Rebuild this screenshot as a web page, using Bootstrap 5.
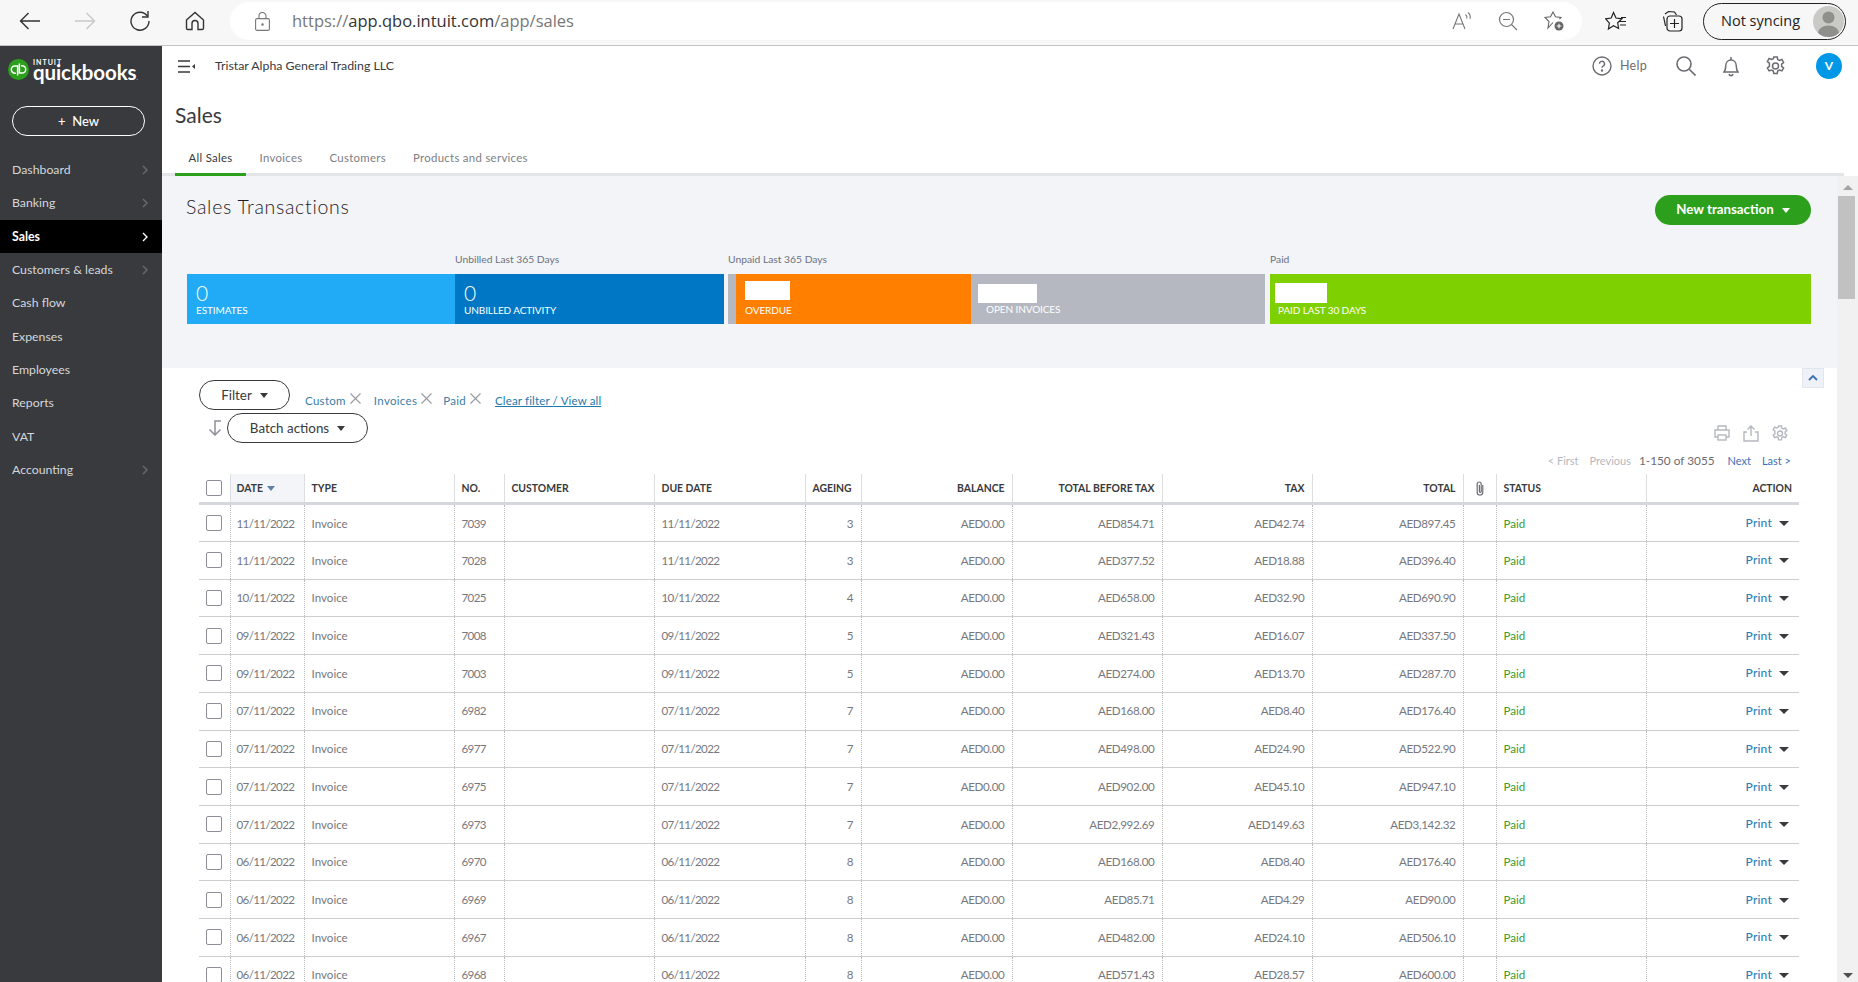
<!doctype html>
<html lang="en">
<head>
<meta charset="utf-8">
<title>Sales - QuickBooks</title>
<link href="https://cdn.jsdelivr.net/npm/bootstrap@5.3.0/dist/css/bootstrap.min.css" rel="stylesheet">
<style>
html,body{height:100%;}
body{overflow:hidden;font-family:Lato,"Liberation Sans",sans-serif;color:#393a3d;background:#fff;font-size:12px;}
svg{display:block;flex:none;}
.shell{height:982px;}
/* browser chrome */
.chrome{height:46px;background:#f7f7f7;border-bottom:1px solid #c4c4c4;padding:0 0 3px 10px;flex:none;}
.cbtn{width:40px;height:40px;margin-right:15px;flex:none;}
.addr{width:1352px;height:38px;background:#fff;border-radius:19px;flex:none;padding-left:25px;margin-left:0;}
.addr-text{font-family:"Open Sans",sans-serif;font-size:16.5px;color:#777;margin-left:22px;white-space:nowrap;}
.addr-text b{font-weight:400;color:#333;}
.pill-icons{gap:26px;padding-right:18px;}
.ico20{width:20px;height:20px;}
.chrome-right{margin-left:23px;gap:34px;}
.sync{width:143px;height:37px;border:1.5px solid #222;border-radius:19px;margin-left:20px;padding:0 1px 0 17px;font-family:"Open Sans",sans-serif;font-size:14.5px;color:#222;flex:none;white-space:nowrap;}
.sync-av{width:31px;height:31px;border-radius:50%;background:#c9c9c6;overflow:hidden;flex:none;}
/* sidebar */
.side{width:162px;background:#393a3d;flex:none;}
.brand{height:42px;padding:13px 0 0 8px;margin-bottom:18px;}
.brand-words{margin-left:4px;line-height:1;color:#fff;}
.brand-in{font-size:7px;font-weight:700;letter-spacing:1px;height:5px;line-height:5px;margin-top:1px;}
.brand-qb{font-size:20.5px;font-weight:700;line-height:15px;letter-spacing:-.1px;}
.brand-qb i{font-style:normal;font-size:6px;font-weight:400;}
.new-btn{width:133px;height:30px;margin-left:12px;border:1px solid #fff;border-radius:15px;color:#fff;font-size:13px;font-weight:500;padding:1px 0 0;background:transparent;margin-bottom:17.4px;}
.new-btn:hover{color:#fff;}
.side-link{height:33.35px;padding:0 12px;color:#d4d7dc;font-size:12.3px;}
.side-link:hover{color:#fff;}
.side-link.on{background:#000;color:#fff;font-weight:700;}
.chev{width:6px;height:10px;margin-right:2px;}
/* header */
.main{min-width:0;}
.topbar{height:40px;padding:0 16px 0 16px;flex:none;}
.company{font-size:12.35px;margin-left:20px;color:#393a3d;}
.help{color:#6b6c72;font-size:12.5px;letter-spacing:.3px;margin:0 29px 0 8px;}
.avatar{width:26px;height:26px;border-radius:50%;background:#0097e6;color:#fff;font-size:12px;font-weight:700;flex:none;}
.ic-search{margin-right:27px;}
.ic-bell{margin-right:27px;}
.ic-gear{margin-right:31px;}
.page-title{font-size:21px;margin:0 0 0 13px;padding-top:15px;height:55px;line-height:28px;font-weight:400;color:#393a3d;}
.tabs-row{height:36px;margin-right:14px;border-bottom:3px solid #e3e5e8;flex:none;padding-left:13px;}
.tab-i{height:36px;padding:9px 13.5px 0;color:#7c7e85;font-size:11.4px;letter-spacing:.3px;margin-bottom:-3px;border-bottom:3px solid transparent;}
.tab-i:hover{color:#7c7e85;}
.tab-i.on{color:#393a3d;border-bottom-color:#2ca01c;font-weight:400;}
/* scroll area */
.scrollwrap{min-height:0;}
.pane{min-width:0;overflow:hidden;}
.track{width:21px;background:#f1f1f1;flex:none;}
.arrow-u{width:0;height:0;border-left:5px solid transparent;border-right:5px solid transparent;border-bottom:5px solid #a3a3a3;margin:9px auto 6px;}
.thumb{width:17px;height:103px;background:#c1c1c1;margin-left:1px;}
.arrow-d{width:0;height:0;border-left:5px solid transparent;border-right:5px solid transparent;border-top:5px solid #505050;margin:0 auto 4px;}
.summary{height:192px;background:#f3f4f7;padding:19px 26px 0 24px;flex:none;}
.sum-title{font-size:19.5px;font-weight:300;letter-spacing:.7px;line-height:24px;color:#1f2023;margin:0;}
.new-tx{width:156px;height:30px;border-radius:15px;background:#2ca01c;color:#fff;font-size:13.3px;font-weight:700;padding:0;border:0;}
.new-tx:hover{background:#2ca01c;color:#fff;}
.tri{display:inline-block;width:0;height:0;border-left:4px solid transparent;border-right:4px solid transparent;border-top:5px solid currentColor;}
.bars{margin:28px 0 0 1px;}
.grp1{width:537px;margin-right:4px;}
.grp2{width:537px;margin-right:5px;}
.grp3{width:541px;}
.col-est{width:268px;}
.col-unb{width:269px;}
.blabel{height:21px;line-height:12px;font-size:10.3px;color:#6b7280;flex:none;white-space:nowrap;}
.seg{height:50px;color:#fff;font-size:10px;padding:7px 0 0 9px;}
.seg-org{width:235px;}
.seg-num{font-size:21px;font-weight:300;line-height:23px;height:22px;}
.seg-lab{line-height:14px;height:14px;white-space:nowrap;letter-spacing:-.1px;}
.c-est{background:#21abf6;}
.c-unb{background:#0077c5;}
.c-gry{background:#b5b8c0;}
.c-org{background:#ff8000;}
.c-grn{background:#7fd000;}
.sliver{width:8px;flex:none;}
.seg-open{padding-left:7px;}
.seg-paid{padding-left:8px;}
.redact{background:#fff;}
.r1{width:45px;height:19px;margin-bottom:3px;}
.r2{width:59px;height:19px;margin:3px 0 -1px;}
.r3{width:52px;height:20px;margin:2px 0 0 -3px;}
.lab-open{margin-left:8px;}
/* filter */
.tools{height:106px;padding:12px 37px 0;position:relative;flex:none;}
.collapse-btn{position:absolute;right:13px;top:0;width:22px;height:20px;background:#eef1f7;border:1px solid #e2e6ee;}
.pill{height:30px;border:1px solid #393a3d;border-radius:15px;background:#fff;color:#393a3d;font-size:13.4px;padding:0;}
.pill:hover{background:#fff;color:#393a3d;border-color:#393a3d;}
.p-filter{width:91px;}
.p-batch{width:141px;}
.chips{margin-left:15px;font-size:11.5px;color:#3b7ea8;padding-top:12px;letter-spacing:.3px;}
.chips a{color:#1f79ae;margin-left:14px;letter-spacing:.15px;}
.chip-x{margin:1px 0 0 4px;}
.chip-g{margin-right:13px;}
.chip-h{margin-right:11px;}
.batch-row{margin-top:3px;}
.sort-ic{margin:7px 5px 0 9px;}
.tool-right{padding-right:9px;}
.tool-ic{gap:13px;margin-bottom:11.5px;padding-right:3px;}
.pager{font-size:11px;color:#b5b8c0;height:14px;line-height:14px;margin-bottom:6.5px;white-space:nowrap;}
.pager .cnt{color:#6b6c72;font-size:11.8px;margin:0 13px 0 8px;}
.pager a{color:#3f6fb5;text-decoration:none;}
.pager .gap1{margin-right:11px;}
/* table */
.tblwrap{padding:0 37px;}
.qtable{table-layout:fixed;width:1600px;margin:0;border-collapse:collapse;font-size:11.6px;color:#77787e;}
.qtable>thead>tr>th{height:29.5px;padding:0 7px;border-top:0;border-bottom:3px solid #d4d7dc;border-left:1px solid #dcdee2;font-size:10.4px;font-weight:700;color:#393a3d;vertical-align:middle;white-space:nowrap;background:#fff;box-shadow:none;}
.qtable>tbody>tr>td{height:37.7px;padding:0 7px;border-bottom:1px solid #ccced2;border-left:1px dotted #b9b9b9;vertical-align:middle;color:#77787e;background:#fff;box-shadow:none;white-space:nowrap;font-weight:400;}
.qtable>thead>tr>th:first-child,.qtable>tbody>tr>td:first-child{border-left:0;padding:0 0 0 7px;}
.qtable>thead>tr>th.th-sort{background:#f4f5f8;padding-left:6px;}
.qtable>tbody>tr>td.dt{letter-spacing:-.65px;}
.qtable>tbody>tr>td.d{padding-left:6px;padding-right:0;letter-spacing:-.65px;}
.qtable>tbody>tr>td.mn{text-align:right;letter-spacing:-.35px;}
.qtable>tbody>tr>td.pd{color:#3c9b2c;}
.qtable>tbody>tr>td.act{padding-right:10px;}
.qtable>thead>tr>th.act-h{padding-right:7px;}
.qtable .form-check-input{width:16px;height:16px;margin:0;border:1px solid #8d9096;border-radius:2px;display:block;}
.pr{color:#2b7fb8;font-size:12px;font-weight:500;margin-right:7px;letter-spacing:.2px;}
.car{color:#393a3d;vertical-align:1px;border-left-width:5px;border-right-width:5px;border-top-width:5.5px;}
.tri-sort{color:#5f7fa5;margin-left:2px;vertical-align:1px;}
.clip{margin-left:5px;}
</style>
</head>
<body>
<div class="shell d-flex flex-column">
  <div class="chrome d-flex align-items-center">
    <div class="cbtn d-flex align-items-center justify-content-center"><svg width="22" height="18" viewBox="0 0 22 18" fill="none" stroke="#333" stroke-width="1.4"><path d="M21 9H1.500M9.500 1 1.500 9l8 8"/></svg></div>
    <div class="cbtn d-flex align-items-center justify-content-center"><svg width="22" height="18" viewBox="0 0 22 18" fill="none" stroke="#c9c9c9" stroke-width="1.4"><path d="M1 9h19.500M12.500 1l8 8-8 8"/></svg></div>
    <div class="cbtn d-flex align-items-center justify-content-center"><svg width="22" height="22" viewBox="0 0 22 22" fill="none" stroke="#333" stroke-width="1.4"><path d="M18.500 6.200A9 9 0 1 0 20 11"/><path d="M19 1v6h-6"/></svg></div>
    <div class="cbtn d-flex align-items-center justify-content-center"><svg width="20" height="20" viewBox="0 0 20 20" fill="none" stroke="#333" stroke-width="1.4"><path d="M1.500 9 10 1.500 18.500 9v8.200a1.300 1.300 0 0 1-1.300 1.300H13v-6a3 3 0 0 0-6 0v6H2.800a1.300 1.300 0 0 1-1.300-1.300z"/></svg></div>
    <div class="addr d-flex align-items-center">
      <svg width="15" height="19" viewBox="0 0 15 19" fill="none" stroke="#777" stroke-width="1.1"><rect x=".6" y="6.600" width="13.800" height="11.800" rx="1.500"/><path d="M4 6.500V4a3.500 3.500 0 0 1 7 0v2.500"/><circle cx="7.500" cy="12.500" r=".7" fill="#777"/></svg>
      <span class="addr-text">https://<b>app.qbo.intuit.com</b>/app/sales</span>
      <div class="ms-auto d-flex align-items-center pill-icons">
        <svg class="ico20" viewBox="0 0 20 20" fill="none" stroke="#777" stroke-width="1.1"><path d="M1 18 7 3l6 15M3.200 13h7.600M13.500 3.500c1.300 1 1.700 2.500 1.300 4M16 1.500c2 1.600 2.600 4 2 6.300"/></svg>
        <svg class="ico20" viewBox="0 0 20 20" fill="none" stroke="#777" stroke-width="1.200"><circle cx="8.500" cy="8.500" r="7"/><path d="M13.500 13.500 19 19M5 8.500h7"/></svg>
        <svg class="ico20" viewBox="0 0 20 20" fill="none" stroke="#666" stroke-width="1.100"><path d="M9 11.500 4 17l1-6.500L1 6.500l5.500-.8L9 1l2.500 4.700 5.500.8-1.500 1.500"/><circle cx="15" cy="15" r="4.500" fill="#666" stroke="none"/><path d="M12.700 15h4.600M15 12.700v4.600" stroke="#fff"/></svg>
      </div>
    </div>
    <div class="d-flex align-items-center chrome-right">
      <svg width="22" height="20" viewBox="0 0 22 20" fill="none" stroke="#222" stroke-width="1.200"><path d="M8.500 1.500 11 7l6 .8-4.300 4 .9 5.700-5.100-2.700L3.400 18l1-5.800L.6 7.800l5.600-.8zM14 10.500h7M15 14h6M16 6.500h5"/></svg>
      <svg width="22" height="22" viewBox="0 0 22 22" fill="none" stroke="#222" stroke-width="1.200"><path d="M4 4 7.500 1.500 13.500 2l2 3"/><path d="M2.500 6.500 4.500 16"/><rect x="6" y="6" width="15" height="15" rx="3"/><path d="M13.500 9v9M9 13.500h9"/></svg>
    </div>
    <div class="sync d-flex align-items-center justify-content-between">Not syncing
      <div class="sync-av"><svg width="31" height="31" viewBox="0 0 31 31" fill="#8f8f8c"><circle cx="15.500" cy="11.500" r="6"/><ellipse cx="15.500" cy="27" rx="10.500" ry="7.500"/></svg></div>
    </div>
  </div>
  <div class="d-flex flex-grow-1" style="min-height:0">
    <aside class="side d-flex flex-column">
      <div class="brand d-flex align-items-start">
        <svg width="21" height="21" viewBox="0 0 21 21" fill="none"><circle cx="10.500" cy="10.500" r="10.500" fill="#2ca01c"/><path d="M9.600 16.500V7H6.900a3.600 3.600 0 0 0 0 7.200H8M11.400 4.500V14h2.700a3.600 3.600 0 0 0 0-7.200H13" stroke="#fff" stroke-width="1.500"/></svg>
        <div class="brand-words"><div class="brand-in">INTUIT</div><div class="brand-qb">quickbooks<i>.</i></div></div>
      </div>
      <button type="button" class="btn new-btn">+ &nbsp;New</button>
      <nav class="nav flex-column">
        <a class="nav-link side-link d-flex align-items-center justify-content-between" href="#">Dashboard<svg class="chev" viewBox="0 0 6 10" fill="none" stroke="#6b6c72" stroke-width="1.400"><path d="m1 1 4 4-4 4"/></svg></a>
        <a class="nav-link side-link d-flex align-items-center justify-content-between" href="#">Banking<svg class="chev" viewBox="0 0 6 10" fill="none" stroke="#6b6c72" stroke-width="1.400"><path d="m1 1 4 4-4 4"/></svg></a>
        <a class="nav-link side-link on d-flex align-items-center justify-content-between" href="#">Sales<svg class="chev" viewBox="0 0 6 10" fill="none" stroke="#fff" stroke-width="1.400"><path d="m1 1 4 4-4 4"/></svg></a>
        <a class="nav-link side-link d-flex align-items-center justify-content-between" href="#">Customers &amp; leads<svg class="chev" viewBox="0 0 6 10" fill="none" stroke="#6b6c72" stroke-width="1.400"><path d="m1 1 4 4-4 4"/></svg></a>
        <a class="nav-link side-link d-flex align-items-center" href="#">Cash flow</a>
        <a class="nav-link side-link d-flex align-items-center" href="#">Expenses</a>
        <a class="nav-link side-link d-flex align-items-center" href="#">Employees</a>
        <a class="nav-link side-link d-flex align-items-center" href="#">Reports</a>
        <a class="nav-link side-link d-flex align-items-center" href="#">VAT</a>
        <a class="nav-link side-link d-flex align-items-center justify-content-between" href="#">Accounting<svg class="chev" viewBox="0 0 6 10" fill="none" stroke="#6b6c72" stroke-width="1.400"><path d="m1 1 4 4-4 4"/></svg></a>
      </nav>
    </aside>
    <div class="main flex-grow-1 d-flex flex-column">
      <div class="topbar d-flex align-items-center">
        <svg width="17" height="13" viewBox="0 0 17 13" fill="none" stroke="#393a3d" stroke-width="1.500"><path d="M0 1h12M0 6.500h12M0 12h12"/><path d="M17 4v5l-3-2.500z" fill="#393a3d" stroke="none"/></svg>
        <span class="company">Tristar Alpha General Trading LLC</span>
        <div class="ms-auto d-flex align-items-center">
          <svg width="20" height="20" viewBox="0 0 20 20" fill="none" stroke="#6b6c72" stroke-width="1.400"><circle cx="10" cy="10" r="9"/><path d="M7.500 7.800a2.500 2.500 0 1 1 3.700 2.200c-.8.500-1.200 1-1.200 1.800"/><circle cx="10" cy="14.500" r=".5" fill="#6b6c72"/></svg>
          <span class="help">Help</span>
          <svg class="ic-search" width="20" height="20" viewBox="0 0 20 20" fill="none" stroke="#6b6c72" stroke-width="1.600"><circle cx="8" cy="8" r="7"/><path d="m13 13 6.500 6.500"/></svg>
          <svg class="ic-bell" width="16" height="21" viewBox="0 0 16 21" fill="none" stroke="#6b6c72" stroke-width="1.500"><path d="M1 16c1.500-1.500 1.700-3 1.700-6C2.700 6.500 5 4 8 4s5.300 2.500 5.300 6c0 3 .2 4.500 1.700 6zM8 1v3M6 18c.3 1.200 1 1.700 2 1.700s1.700-.5 2-1.700"/></svg>
          <svg class="ic-gear" width="19" height="20" viewBox="0 0 19 20" fill="none" stroke="#6b6c72" stroke-width="1.500"><path d="M7.800 1h3.400l.5 2.600 1.800.9 2.400-1 1.700 3-2 1.700v2.100l2 1.600-1.700 3-2.400-.9-1.800 1-.5 2.600H7.800l-.5-2.600-1.800-1-2.400.9-1.700-3 2-1.600V7.200l-2-1.700 1.700-3 2.400 1 1.800-.9z"/><circle cx="9.500" cy="10" r="3"/></svg>
          <div class="avatar d-flex align-items-center justify-content-center">V</div>
        </div>
      </div>
      <h1 class="page-title">Sales</h1>
      <div class="tabs-row d-flex">
        <a class="tab-i on text-decoration-none" href="#">All Sales</a>
        <a class="tab-i text-decoration-none" href="#">Invoices</a>
        <a class="tab-i text-decoration-none" href="#">Customers</a>
        <a class="tab-i text-decoration-none" href="#">Products and services</a>
      </div>
      <div class="scrollwrap d-flex flex-grow-1">
        <div class="pane flex-grow-1 d-flex flex-column">
          <section class="summary">
            <div class="d-flex justify-content-between align-items-start">
              <h2 class="sum-title">Sales Transactions</h2>
              <button type="button" class="btn new-tx d-flex align-items-center justify-content-center gap-2">New transaction <span class="tri"></span></button>
            </div>
            <div class="bars d-flex">
              <div class="grp1 d-flex">
                <div class="col-est d-flex flex-column"><div class="blabel"></div><div class="seg c-est"><div class="seg-num">0</div><div class="seg-lab">ESTIMATES</div></div></div>
                <div class="col-unb d-flex flex-column"><div class="blabel">Unbilled Last 365 Days</div><div class="seg c-unb"><div class="seg-num">0</div><div class="seg-lab">UNBILLED ACTIVITY</div></div></div>
              </div>
              <div class="grp2 d-flex flex-column">
                <div class="blabel">Unpaid Last 365 Days</div>
                <div class="d-flex">
                  <div class="sliver c-gry"></div>
                  <div class="seg seg-org c-org"><div class="redact r1"></div><div class="seg-lab">OVERDUE</div></div>
                  <div class="seg seg-open c-gry flex-grow-1"><div class="redact r2"></div><div class="seg-lab lab-open">OPEN INVOICES</div></div>
                </div>
              </div>
              <div class="grp3 d-flex flex-column">
                <div class="blabel">Paid</div>
                <div class="seg seg-paid c-grn"><div class="redact r3"></div><div class="seg-lab">PAID LAST 30 DAYS</div></div>
              </div>
            </div>
          </section>
          <section class="tools d-flex justify-content-between">
            <div class="collapse-btn d-flex align-items-center justify-content-center"><svg width="10" height="6" viewBox="0 0 10 6" fill="none" stroke="#3f6fb5" stroke-width="1.800"><path d="m1 5 4-4 4 4"/></svg></div>
            <div>
              <div class="d-flex">
                <button type="button" class="btn pill p-filter d-flex align-items-center justify-content-center gap-2">Filter <span class="tri"></span></button>
                <div class="chips d-flex align-items-start">
                  <span class="d-flex chip-g">Custom<svg class="chip-x" width="11" height="11" viewBox="0 0 11 11" stroke="#9a9ca2" stroke-width="1.200"><path d="m.5.500 10 10m0-10-10 10"/></svg></span>
                  <span class="d-flex chip-h">Invoices<svg class="chip-x" width="11" height="11" viewBox="0 0 11 11" stroke="#9a9ca2" stroke-width="1.200"><path d="m.5.500 10 10m0-10-10 10"/></svg></span>
                  <span class="d-flex">Paid<svg class="chip-x" width="11" height="11" viewBox="0 0 11 11" stroke="#9a9ca2" stroke-width="1.200"><path d="m.5.500 10 10m0-10-10 10"/></svg></span>
                  <a href="#">Clear filter / View all</a>
                </div>
              </div>
              <div class="d-flex batch-row">
                <svg class="sort-ic" width="14" height="16" viewBox="0 0 14 16" fill="none" stroke="#8d9096" stroke-width="1.500"><path d="M13 1H7v14M1.500 9.500 7 15l5.500-5.500"/></svg>
                <button type="button" class="btn pill p-batch d-flex align-items-center justify-content-center gap-2">Batch actions <span class="tri"></span></button>
              </div>
            </div>
            <div class="d-flex flex-column align-items-end justify-content-end tool-right">
              <div class="d-flex tool-ic">
                <svg width="16" height="16" viewBox="0 0 16 16" fill="none" stroke="#b5b8c0" stroke-width="1.400"><path d="M4 5V1h8v4M4 12H1V5h14v7h-3"/><rect x="4" y="10" width="8" height="5"/></svg>
                <svg width="16" height="17" viewBox="0 0 16 17" fill="none" stroke="#b5b8c0" stroke-width="1.400"><path d="M4 7H1v9h14V7h-3M8 11V1M4.500 4.500 8 1l3.500 3.500"/></svg>
                <svg width="16" height="17" viewBox="0 0 19 20" fill="none" stroke="#b5b8c0" stroke-width="1.700"><path d="M7.800 1h3.400l.5 2.600 1.800.9 2.400-1 1.700 3-2 1.700v2.100l2 1.600-1.700 3-2.400-.9-1.800 1-.5 2.600H7.800l-.5-2.600-1.800-1-2.400.9-1.700-3 2-1.600V7.200l-2-1.700 1.700-3 2.400 1 1.800-.9z"/><circle cx="9.500" cy="10" r="3"/></svg>
              </div>
              <div class="pager"><span class="gap1">&lt; First</span><span>Previous</span><span class="cnt">1-150 of 3055</span><a class="gap1" href="#">Next</a><a href="#">Last &gt;</a></div>
            </div>
          </section>
          <div class="tblwrap">
            <table class="table qtable">
              <colgroup><col style="width:31px"><col style="width:74px"><col style="width:150px"><col style="width:50px"><col style="width:150px"><col style="width:151px"><col style="width:56px"><col style="width:151px"><col style="width:150px"><col style="width:150px"><col style="width:151px"><col style="width:33px"><col style="width:150px"><col style="width:153px"></colgroup>
              <thead><tr>
                <th><input class="form-check-input" type="checkbox" aria-label="Select all"></th>
                <th class="th-sort">DATE <span class="tri tri-sort"></span></th>
                <th>TYPE</th><th>NO.</th><th>CUSTOMER</th><th>DUE DATE</th><th>AGEING</th>
                <th class="text-end">BALANCE</th><th class="text-end">TOTAL BEFORE TAX</th><th class="text-end">TAX</th><th class="text-end">TOTAL</th>
                <th><svg class="clip" width="8" height="15" viewBox="0 0 8 15" fill="none" stroke="#6b6c72" stroke-width="1.200"><path d="M6.800 4v7.200a2.800 2.800 0 0 1-5.600 0V3a2 2 0 0 1 4 0v7.500a.9.900 0 0 1-1.800 0V4"/></svg></th>
                <th>STATUS</th><th class="text-end act-h">ACTION</th>
              </tr></thead>
              <tbody>
<tr><td><input class="form-check-input" type="checkbox" aria-label="Select"></td><td class="d">11/11/2022</td><td>Invoice</td><td class="dt">7039</td><td></td><td class="dt">11/11/2022</td><td class="text-end">3</td><td class="mn">AED0.00</td><td class="mn">AED854.71</td><td class="mn">AED42.74</td><td class="mn">AED897.45</td><td></td><td class="pd">Paid</td><td class="text-end act"><a class="pr text-decoration-none" href="#">Print</a><span class="tri car"></span></td></tr>
<tr><td><input class="form-check-input" type="checkbox" aria-label="Select"></td><td class="d">11/11/2022</td><td>Invoice</td><td class="dt">7028</td><td></td><td class="dt">11/11/2022</td><td class="text-end">3</td><td class="mn">AED0.00</td><td class="mn">AED377.52</td><td class="mn">AED18.88</td><td class="mn">AED396.40</td><td></td><td class="pd">Paid</td><td class="text-end act"><a class="pr text-decoration-none" href="#">Print</a><span class="tri car"></span></td></tr>
<tr><td><input class="form-check-input" type="checkbox" aria-label="Select"></td><td class="d">10/11/2022</td><td>Invoice</td><td class="dt">7025</td><td></td><td class="dt">10/11/2022</td><td class="text-end">4</td><td class="mn">AED0.00</td><td class="mn">AED658.00</td><td class="mn">AED32.90</td><td class="mn">AED690.90</td><td></td><td class="pd">Paid</td><td class="text-end act"><a class="pr text-decoration-none" href="#">Print</a><span class="tri car"></span></td></tr>
<tr><td><input class="form-check-input" type="checkbox" aria-label="Select"></td><td class="d">09/11/2022</td><td>Invoice</td><td class="dt">7008</td><td></td><td class="dt">09/11/2022</td><td class="text-end">5</td><td class="mn">AED0.00</td><td class="mn">AED321.43</td><td class="mn">AED16.07</td><td class="mn">AED337.50</td><td></td><td class="pd">Paid</td><td class="text-end act"><a class="pr text-decoration-none" href="#">Print</a><span class="tri car"></span></td></tr>
<tr><td><input class="form-check-input" type="checkbox" aria-label="Select"></td><td class="d">09/11/2022</td><td>Invoice</td><td class="dt">7003</td><td></td><td class="dt">09/11/2022</td><td class="text-end">5</td><td class="mn">AED0.00</td><td class="mn">AED274.00</td><td class="mn">AED13.70</td><td class="mn">AED287.70</td><td></td><td class="pd">Paid</td><td class="text-end act"><a class="pr text-decoration-none" href="#">Print</a><span class="tri car"></span></td></tr>
<tr><td><input class="form-check-input" type="checkbox" aria-label="Select"></td><td class="d">07/11/2022</td><td>Invoice</td><td class="dt">6982</td><td></td><td class="dt">07/11/2022</td><td class="text-end">7</td><td class="mn">AED0.00</td><td class="mn">AED168.00</td><td class="mn">AED8.40</td><td class="mn">AED176.40</td><td></td><td class="pd">Paid</td><td class="text-end act"><a class="pr text-decoration-none" href="#">Print</a><span class="tri car"></span></td></tr>
<tr><td><input class="form-check-input" type="checkbox" aria-label="Select"></td><td class="d">07/11/2022</td><td>Invoice</td><td class="dt">6977</td><td></td><td class="dt">07/11/2022</td><td class="text-end">7</td><td class="mn">AED0.00</td><td class="mn">AED498.00</td><td class="mn">AED24.90</td><td class="mn">AED522.90</td><td></td><td class="pd">Paid</td><td class="text-end act"><a class="pr text-decoration-none" href="#">Print</a><span class="tri car"></span></td></tr>
<tr><td><input class="form-check-input" type="checkbox" aria-label="Select"></td><td class="d">07/11/2022</td><td>Invoice</td><td class="dt">6975</td><td></td><td class="dt">07/11/2022</td><td class="text-end">7</td><td class="mn">AED0.00</td><td class="mn">AED902.00</td><td class="mn">AED45.10</td><td class="mn">AED947.10</td><td></td><td class="pd">Paid</td><td class="text-end act"><a class="pr text-decoration-none" href="#">Print</a><span class="tri car"></span></td></tr>
<tr><td><input class="form-check-input" type="checkbox" aria-label="Select"></td><td class="d">07/11/2022</td><td>Invoice</td><td class="dt">6973</td><td></td><td class="dt">07/11/2022</td><td class="text-end">7</td><td class="mn">AED0.00</td><td class="mn">AED2,992.69</td><td class="mn">AED149.63</td><td class="mn">AED3,142.32</td><td></td><td class="pd">Paid</td><td class="text-end act"><a class="pr text-decoration-none" href="#">Print</a><span class="tri car"></span></td></tr>
<tr><td><input class="form-check-input" type="checkbox" aria-label="Select"></td><td class="d">06/11/2022</td><td>Invoice</td><td class="dt">6970</td><td></td><td class="dt">06/11/2022</td><td class="text-end">8</td><td class="mn">AED0.00</td><td class="mn">AED168.00</td><td class="mn">AED8.40</td><td class="mn">AED176.40</td><td></td><td class="pd">Paid</td><td class="text-end act"><a class="pr text-decoration-none" href="#">Print</a><span class="tri car"></span></td></tr>
<tr><td><input class="form-check-input" type="checkbox" aria-label="Select"></td><td class="d">06/11/2022</td><td>Invoice</td><td class="dt">6969</td><td></td><td class="dt">06/11/2022</td><td class="text-end">8</td><td class="mn">AED0.00</td><td class="mn">AED85.71</td><td class="mn">AED4.29</td><td class="mn">AED90.00</td><td></td><td class="pd">Paid</td><td class="text-end act"><a class="pr text-decoration-none" href="#">Print</a><span class="tri car"></span></td></tr>
<tr><td><input class="form-check-input" type="checkbox" aria-label="Select"></td><td class="d">06/11/2022</td><td>Invoice</td><td class="dt">6967</td><td></td><td class="dt">06/11/2022</td><td class="text-end">8</td><td class="mn">AED0.00</td><td class="mn">AED482.00</td><td class="mn">AED24.10</td><td class="mn">AED506.10</td><td></td><td class="pd">Paid</td><td class="text-end act"><a class="pr text-decoration-none" href="#">Print</a><span class="tri car"></span></td></tr>
<tr><td><input class="form-check-input" type="checkbox" aria-label="Select"></td><td class="d">06/11/2022</td><td>Invoice</td><td class="dt">6968</td><td></td><td class="dt">06/11/2022</td><td class="text-end">8</td><td class="mn">AED0.00</td><td class="mn">AED571.43</td><td class="mn">AED28.57</td><td class="mn">AED600.00</td><td></td><td class="pd">Paid</td><td class="text-end act"><a class="pr text-decoration-none" href="#">Print</a><span class="tri car"></span></td></tr>
              </tbody>
            </table>
          </div>
        </div>
        <div class="track d-flex flex-column">
          <div class="arrow-u"></div>
          <div class="thumb"></div>
          <div class="arrow-d mt-auto"></div>
        </div>
      </div>
    </div>
  </div>
</div>
<script src="https://cdn.jsdelivr.net/npm/bootstrap@5.3.0/dist/js/bootstrap.bundle.min.js"></script>
</body>
</html>
